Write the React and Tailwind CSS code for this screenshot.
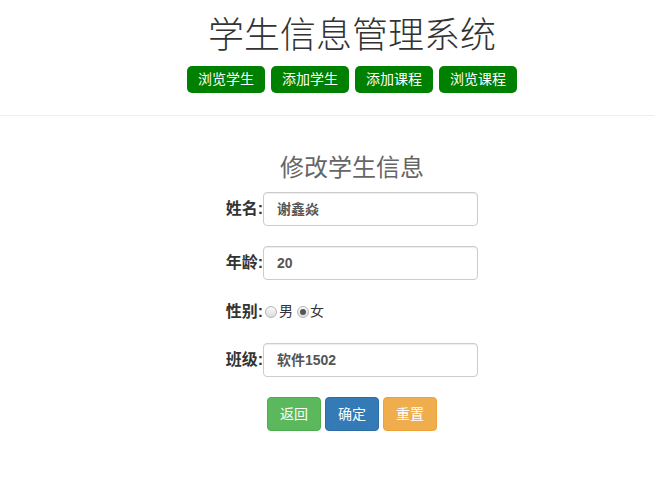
const font = { fontFamily: '"Liberation Sans", "Noto Sans CJK SC", sans-serif' };

const navItems = ["浏览学生", "添加学生", "添加课程", "浏览课程"];

const Radio = ({ checked }) => (
  <span className="inline-flex w-[12px] h-[12px] rounded-full border border-[#b5b5b5] bg-gradient-to-b from-[#fafafa] to-[#dcdcdc] items-center justify-center">
    {checked && <span className="w-[6px] h-[6px] rounded-full bg-[#555]"></span>}
  </span>
);

const Label = ({ children }) => (
  <div className="w-[37px] shrink-0 flex justify-end whitespace-nowrap font-bold text-[16px] text-[#333]">{children}</div>
);

const Field = ({ label, value }) => (
  <div className="flex items-center">
    <Label>{label}</Label>
    <div className="w-[215px] h-[34px] border border-[#ccc] rounded-[4px] px-[13px] flex items-center font-bold text-[14px] text-[#555] shadow-[inset_0_1px_1px_rgba(0,0,0,0.075)]">
      {value}
    </div>
  </div>
);

export default function App() {
  return (
    <div className="min-h-[490px] bg-white text-[#333]" style={font}>
      <div className="pl-[50px] flex flex-col items-center">
        <h1 className="mt-[14px] text-[36px] leading-[44px] font-light text-[#333]">学生信息管理系统</h1>
        <div className="mt-[8px] flex gap-[6px]">
          {navItems.map((t) => (
            <div key={t} className="w-[78px] h-[27px] bg-[#008000] rounded-[5px] text-white text-[14px] flex items-center justify-center">
              {t}
            </div>
          ))}
        </div>
      </div>
      <div className="mt-[22px] border-t border-[#eee]"></div>
      <div className="pl-[50px] flex flex-col items-center">
        <h2 className="mt-[35px] text-[24px] leading-[34px] text-[#666]">修改学生信息</h2>
        <div className="mt-[7px] flex flex-col gap-[20px]">
          <Field label="姓名:" value="谢鑫焱" />
          <Field label="年龄:" value="20" />
          <div className="flex items-center h-[23px]">
            <Label>性别:</Label>
            <div className="flex items-center text-[14px] text-[#333]">
              <span className="ml-[2px] flex"><Radio /></span>
              <span className="ml-[2px]">男</span>
              <span className="ml-[4px] flex"><Radio checked /></span>
              <span className="ml-[1px]">女</span>
            </div>
          </div>
          <Field label="班级:" value="软件1502" />
          <div className="flex justify-center gap-[4px]">
            <div className="w-[54px] h-[34px] rounded-[4px] bg-[#5cb85c] border border-[#4cae4c] text-white text-[14px] flex items-center justify-center">返回</div>
            <div className="w-[54px] h-[34px] rounded-[4px] bg-[#337ab7] border border-[#2e6da4] text-white text-[14px] flex items-center justify-center">确定</div>
            <div className="w-[54px] h-[34px] rounded-[4px] bg-[#f0ad4e] border border-[#eea236] text-white text-[14px] flex items-center justify-center">重置</div>
          </div>
        </div>
      </div>
    </div>
  );
}
